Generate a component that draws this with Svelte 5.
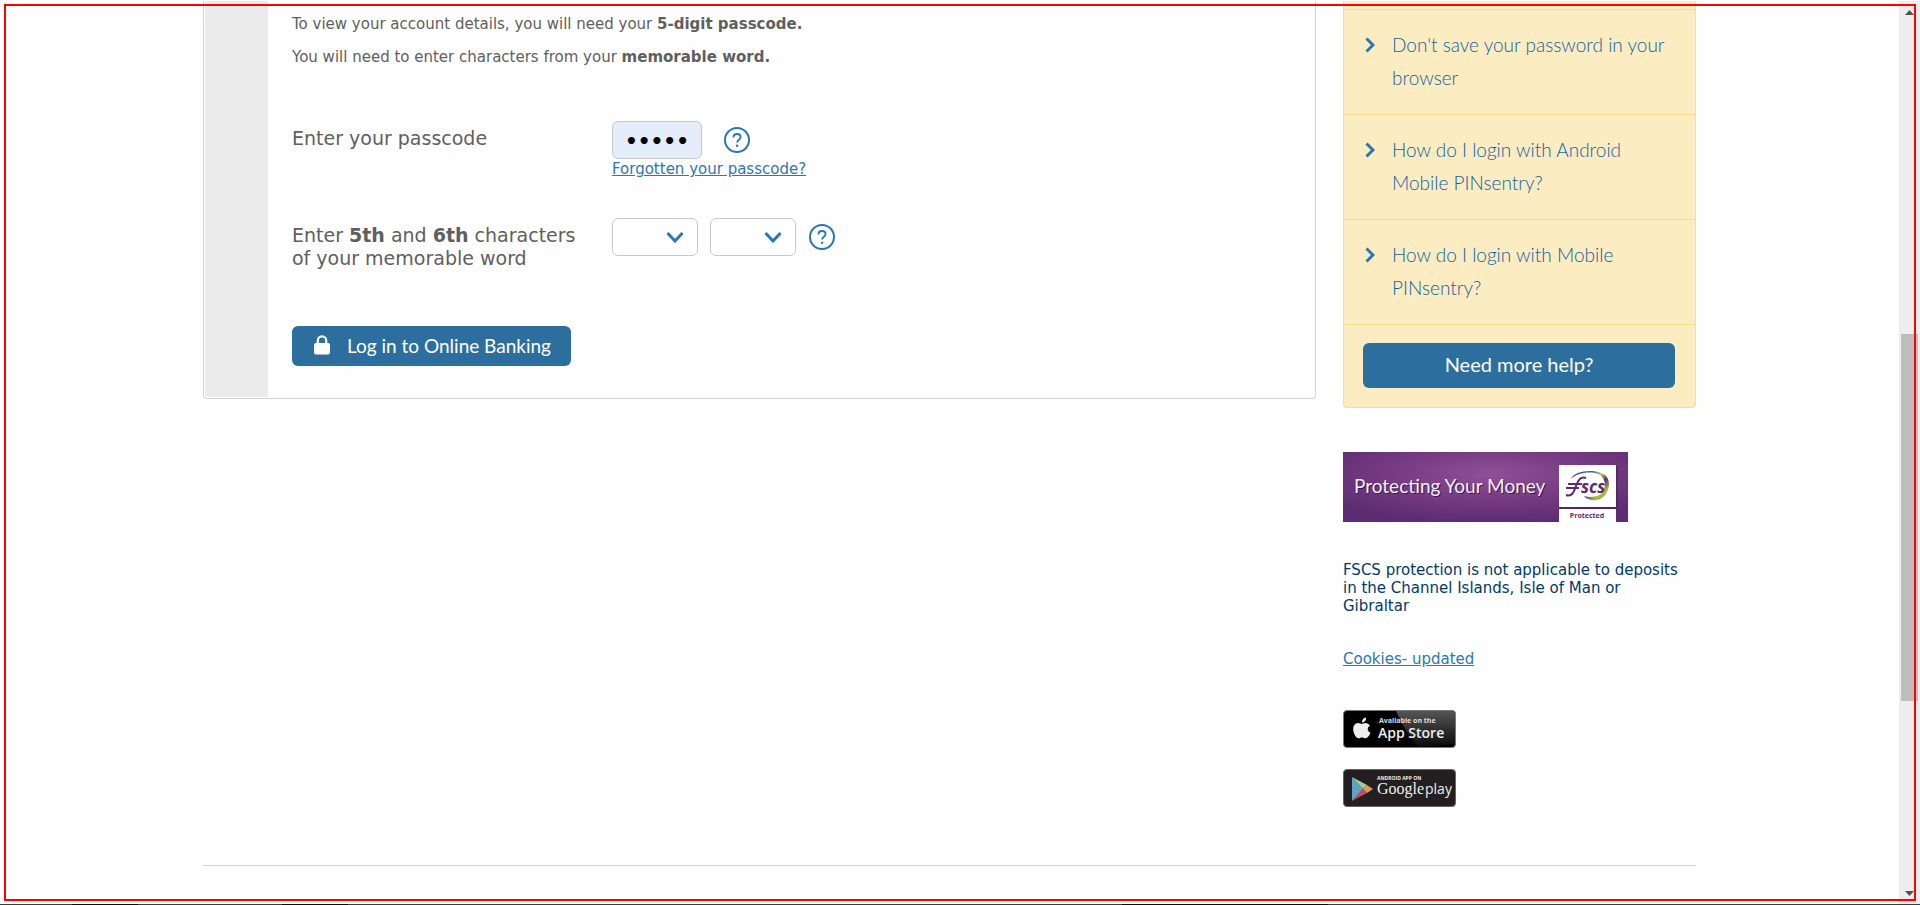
<script>
  const tips = [
    "Don't save your password in your browser",
    'How do I login with Android Mobile PINsentry?',
    'How do I login with Mobile PINsentry?'
  ];
  const letters = 'abcdefghijklmnopqrstuvwxyz'.split('');
  let passcode = $state('12345');
  let fifth = $state('');
  let sixth = $state('');
</script>

{#snippet help(label)}
  <button type="button" class="help" aria-label={label}>
    <svg viewBox="0 0 28 28" width="28" height="28" aria-hidden="true">
      <circle cx="14" cy="14" r="12" fill="none" stroke="#2d77b0" stroke-width="2" />
      <path d="M10.4 11.4C10.4 9.2 12 8 14.1 8S17.6 9.3 17.6 11.1C17.6 13.6 14.1 13.8 14.1 16.6" fill="none" stroke="#2d77b0" stroke-width="1.8" />
      <circle cx="14.1" cy="19.7" r="1.2" fill="#2d77b0" />
    </svg>
  </button>
{/snippet}

<div class="window">
  <div class="page">
    <div class="wrap">
      <div class="columns">
        <main class="card">
          <div class="rail"></div>
          <form class="login" onsubmit={(e) => e.preventDefault()}>
            <p>To view your account details, you will need your <strong>5-digit passcode.</strong></p>
            <p>You will need to enter characters from your <strong>memorable word.</strong></p>

            <div class="row pass">
              <label for="passcode">Enter your passcode</label>
              <div>
                <div class="controls">
                  <input id="passcode" type="password" maxlength="5" bind:value={passcode} />
                  {@render help('Help with passcode')}
                </div>
                <a href="#forgotten">Forgotten your passcode?</a>
              </div>
            </div>

            <div class="row word">
              <label for="fifth">Enter <strong>5th</strong> and <strong>6th</strong> characters<br />of your memorable word</label>
              <div class="controls letters">
                <span class="pick">
                  <select id="fifth" bind:value={fifth}>
                    <option value=""></option>
                    {#each letters as l}<option value={l}>{l}</option>{/each}
                  </select>
                  <svg viewBox="0 0 18 12" width="18" height="12" aria-hidden="true"><path d="M1.500 2L9 10L16.500 2" /></svg>
                </span>
                <span class="pick">
                  <select aria-label="6th character" bind:value={sixth}>
                    <option value=""></option>
                    {#each letters as l}<option value={l}>{l}</option>{/each}
                  </select>
                  <svg viewBox="0 0 18 12" width="18" height="12" aria-hidden="true"><path d="M1.500 2L9 10L16.500 2" /></svg>
                </span>
                {@render help('Help with memorable word')}
              </div>
            </div>

            <button type="submit" class="primary login-btn">
              <svg viewBox="0 0 16 20" width="16" height="20" aria-hidden="true">
                <path d="M3.8 9.5V5.6a4.2 4.2 0 0 1 8.4 0V9.5" fill="none" stroke="#fff" stroke-width="2.2" />
                <rect x="0" y="8" width="16" height="11.5" rx="2" fill="#fff" />
              </svg>
              Log in to Online Banking
            </button>
          </form>
        </main>

        <aside>
          <section class="tips">
            <ul>
              {#each tips as tip}
                <li>
                  <svg viewBox="0 0 10 16" width="10" height="16" aria-hidden="true"><path d="M1.500 1.500L8 8L1.500 14.500" /></svg>
                  <a href="#help">{tip}</a>
                </li>
              {/each}
            </ul>
            <button type="button" class="primary more">Need more help?</button>
          </section>

          <a class="fscs" href="#fscs">
            <svg viewBox="0 0 285 70" width="285" height="70" role="img" aria-label="Protecting Your Money, FSCS Protected">
              <defs>
                <radialGradient id="purple" cx="52%" cy="32%" r="70%">
                  <stop offset="0" stop-color="#8e5196" />
                  <stop offset="0.5" stop-color="#773b83" />
                  <stop offset="1" stop-color="#5b2c71" />
                </radialGradient>
                <linearGradient id="swirl" x1="0" y1="0" x2="1" y2="1">
                  <stop offset="0" stop-color="#5e3a87" />
                  <stop offset="0.3" stop-color="#46639c" />
                  <stop offset="0.45" stop-color="#c9cf4a" />
                  <stop offset="0.6" stop-color="#5b2c71" />
                  <stop offset="0.8" stop-color="#b5c23c" />
                  <stop offset="1" stop-color="#2c5a93" />
                </linearGradient>
              </defs>
              <rect width="285" height="70" fill="url(#purple)" />
              <text x="12" y="42" class="shade">Protecting Your Money</text>
              <text x="11" y="41" class="slogan">Protecting Your Money</text>
              <rect x="217" y="14" width="58" height="43" fill="#401b50" opacity="0.5" />
              <rect x="216" y="13" width="57" height="42" fill="#fff" />
              <rect x="216" y="57" width="57" height="13" fill="#fff" />
              <path d="M228 27C231 18 255 16 263 24C270 32 264 46 254 48C249 49 244 48 241 44C247 46 254 45 258 42C265 35 262 25 255 22C246 19 234 21 228 27Z" fill="url(#swirl)" />
              <path d="M223 43C229 45 231 40 233 34C235 28 238 24 243 26M225 32H239M223 36H236" fill="none" stroke="#5b2c71" stroke-width="2" />
              <text x="238" y="41" class="logo">scs</text>
              <text x="244" y="66" text-anchor="middle" class="protected">Protected</text>
            </svg>
          </a>

          <p class="note">FSCS protection is not applicable to deposits in the Channel Islands, Isle of Man or Gibraltar</p>
          <a class="cookies" href="#cookies">Cookies- updated</a>

          <a class="badge" href="#appstore">
            <svg viewBox="0 0 113 38" width="113" height="38" role="img" aria-label="Available on the App Store">
              <defs>
                <linearGradient id="gloss" x1="0" y1="0" x2="0" y2="1">
                  <stop offset="0" stop-color="#555" />
                  <stop offset="1" stop-color="#0a0a0a" />
                </linearGradient>
              </defs>
              <rect x="0.5" y="0.5" width="112" height="37" rx="3.5" fill="#000" stroke="#777" />
              <path d="M53 1H109Q112 1 112 4V34L75 37Q61 20 53 1Z" fill="url(#gloss)" />
              <path transform="translate(0.500 -0.500)" d="M22.5 8C19.8 8.3 18.3 10.4 18.6 13C21 13 23 10.600 22.500 8ZM26.500 16.200C25.200 14.300 23.500 13.500 21.800 13.500C20.100 13.500 19.200 14.400 18.200 14.400C17.200 14.400 16 13.500 14.500 13.600C11.600 13.800 9.700 16.300 9.700 19.500C9.700 23.800 12.500 28.800 15 28.800C16.300 28.800 16.900 28 18.500 28C20.100 28 20.600 28.800 22 28.800C24.300 28.700 26.200 25.500 27 23.300C23.500 21.600 23.400 17.800 26.500 16.200Z" fill="#eee" />
              <text x="36" y="13" class="small">Available on the</text>
              <text x="35" y="28" class="store">App Store</text>
            </svg>
          </a>

          <a class="badge" href="#googleplay">
            <svg viewBox="0 0 113 38" width="113" height="38" role="img" aria-label="Android app on Google play">
              <rect x="0.5" y="0.5" width="112" height="37" rx="3.500" fill="#231f20" stroke="#666" />
              <path d="M9 8V32L20 20Z" fill="#5aa5c0" />
              <path d="M9 8L24 16L20 20Z" fill="#a9cb92" />
              <path d="M9 32L24 24L20 20Z" fill="#c04a6a" />
              <path d="M24 16L30 20L24 24L20 20Z" fill="#e5975a" />
              <text x="34" y="11" class="tiny">ANDROID APP ON</text>
              <text x="34" y="25" class="google">Google</text>
              <text x="82" y="25" class="play">play</text>
            </svg>
          </a>
        </aside>
      </div>
      <hr />
    </div>
  </div>

  <div class="scroll" aria-hidden="true">
    <svg viewBox="0 0 9 5" width="9" height="5"><path d="M0 5L4.500 0L9 5Z" fill="#505050" /></svg>
    <div class="track"><div class="thumb"></div></div>
    <svg viewBox="0 0 9 5" width="9" height="5"><path d="M0 0H9L4.500 5Z" fill="#505050" /></svg>
  </div>
  <div class="edge"></div>
  <div class="frame"></div>
</div>

<style>
  :global(body) {
    background: #fefefe;
  }
  .window, .window * {
    box-sizing: border-box;
  }
  .window {
    display: grid;
    grid-template-columns: minmax(0, 1fr) 21px;
    grid-template-rows: 1fr 1px;
    min-height: 100vh;
    padding-top: 1px;
    font-family: Verdana, "DejaVu Sans", sans-serif;
    font-size: 15px;
    line-height: 18px;
    color: #5f5f5f;
  }
  .wrap {
    max-width: 1493px;
    margin: 0 auto;
  }
  .columns {
    display: grid;
    grid-template-columns: minmax(0, 1fr) 353px;
    gap: 27px;
    align-items: start;
  }
  a {
    color: #2d77b0;
  }
  .card {
    display: flex;
    border: 1px solid #d4d4d4;
    border-top: 0;
    border-radius: 0 0 4px 4px;
    padding: 0 1px 1px;
  }
  .rail {
    width: 63px;
    background: #ebebeb;
  }
  .login {
    flex: 1;
    padding: 14px 24px 31px;
  }
  .login p {
    margin: 0 0 15px;
  }
  .row {
    display: grid;
    grid-template-columns: 320px 1fr;
  }
  .row label {
    font-size: 19px;
    line-height: 23px;
    padding-top: 6px;
  }
  .pass {
    margin-top: 55px;
  }
  .pass a {
    display: block;
    margin-top: 1px;
  }
  .word {
    margin-top: 40px;
  }
  .controls {
    display: flex;
    align-items: center;
    gap: 21px;
  }
  .letters {
    gap: 12px;
    align-self: start;
  }
  input, select {
    height: 38px;
    border: 1px solid #c8c8c8;
    border-radius: 6px;
    background: #fff;
    font: inherit;
  }
  input {
    width: 90px;
    padding: 2px 12px 0;
    background: #e6edfa;
    color: #000;
    font: bold 20px "DejaVu Sans", sans-serif;
  }
  .pick {
    display: grid;
    align-items: center;
    justify-items: end;
  }
  .pick > * {
    grid-area: 1 / 1;
  }
  .pick svg {
    margin-right: 14px;
    pointer-events: none;
  }
  .pick path, li path {
    fill: none;
    stroke: #2d77b0;
    stroke-width: 3;
  }
  select {
    width: 86px;
    appearance: none;
    padding: 0 12px;
  }
  .help {
    border: 0;
    padding: 0;
    background: none;
    width: 28px;
    height: 28px;
  }
  .primary {
    border: 0;
    border-radius: 6px;
    background: #2c6f9f;
    color: #fff;
    font-family: Lato, sans-serif;
  }
  .login-btn {
    display: flex;
    align-items: center;
    gap: 17px;
    height: 40px;
    margin-top: 56px;
    padding: 0 20px 2px 22px;
    font-size: 19px;
  }
  .tips {
    border: 1px solid #fadf8a;
    border-top: 0;
    border-radius: 0 0 4px 4px;
    background: #fcecc2;
    padding-top: 8px;
  }
  ul {
    list-style: none;
    margin: 0;
    padding: 0;
    border-bottom: 1px solid #fadf8a;
  }
  li {
    display: flex;
    gap: 17px;
    border-top: 1px solid #fadf8a;
    padding: 18px 24px 20px 21px;
    font: 300 19px/33px Lato, sans-serif;
  }
  li svg {
    flex: none;
    margin-top: 9px;
  }
  li a {
    color: #1262a0;
    text-decoration: none;
  }
  .more {
    display: block;
    width: 312px;
    height: 45px;
    margin: 18px 19px 19px;
    padding: 0 0 3px;
    font-size: 20px;
  }
  .fscs, .badge, .badge svg, .fscs svg, .cookies {
    display: block;
  }
  .fscs {
    margin-top: 44px;
  }
  .note {
    margin: 39px 0 0;
    padding-right: 12px;
    color: #003a6b;
  }
  .cookies {
    margin: 35px 0 42px;
  }
  .badge + .badge {
    margin-top: 21px;
  }
  .slogan, .shade {
    font: 19px Lato, sans-serif;
    fill: #f6eef8;
  }
  .shade {
    fill: #3d1a4c;
  }
  .logo {
    font: italic bold 17px "Open Sans", sans-serif;
    fill: #5b2c71;
  }
  .protected {
    font: bold 7px "Open Sans", sans-serif;
    fill: #5b2c71;
  }
  .small {
    font: bold 7px "Open Sans", sans-serif;
    fill: #ddd;
  }
  .store {
    font: 600 14px "Open Sans", sans-serif;
    fill: #eee;
  }
  .tiny {
    font: bold 5px "Open Sans", sans-serif;
    fill: #eee;
  }
  .google {
    font: 16px "Liberation Serif", serif;
    fill: #eee;
  }
  .play {
    font: 14px "Open Sans", sans-serif;
    fill: #eee;
  }
  hr {
    margin: 58px 0 0;
    border: 0;
    border-top: 1px solid #d4d4d4;
  }
  .scroll {
    display: flex;
    flex-direction: column;
    align-items: center;
    background: #ededed;
    padding: 9px 2px 8px;
  }
  .track {
    flex: 1;
    display: grid;
    grid-template-rows: 319fr 367fr 190fr;
    align-self: stretch;
  }
  .thumb {
    grid-row: 2;
    background: #bdbdbd;
  }
  .edge {
    grid-column: 1 / -1;
    background: linear-gradient(90deg, #3a3a40 72px, #0c0c12 72px 138px, #3a3a40 138px 282px, #0c0c12 282px 348px, #3a3a40 348px 1122px, #0c0c12 1122px 1328px, #3a3a40 1328px);
  }
  .frame {
    position: fixed;
    inset: 4px;
    border: 2px solid #f00;
    pointer-events: none;
  }
</style>
